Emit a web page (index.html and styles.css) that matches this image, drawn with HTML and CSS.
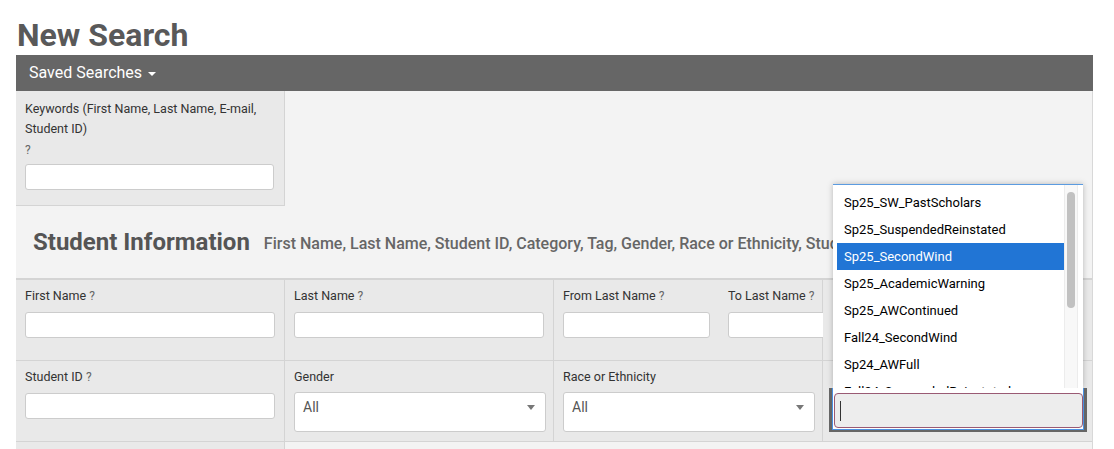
FILE: index.html
```html
<!DOCTYPE html>
<html>
<head>
    <title>New Search</title>
    <link rel="stylesheet" href="styles.css">
</head>
<body>
    <div class="page">
        <h1 class="page-title">New Search</h1>

        <div class="toolbar">
            <span class="saved-searches">Saved Searches <span class="caret"></span></span>
        </div>

        <div class="panel">
            <div class="keyword-cell">
                <label class="field-label">Keywords (First Name, Last Name, E-mail, Student ID)</label>
                <div class="help">?</div>
                <input type="text" class="text-input">
            </div>

            <div class="section-head">
                <h2>Student Information</h2>
                <span class="section-sub">First Name, Last Name, Student ID, Category, Tag, Gender, Race or Ethnicity, Student Type, Class Level</span>
            </div>

            <div class="field-grid">
                <div class="cell">
                    <label class="field-label">First Name <span class="help">?</span></label>
                    <input type="text" class="text-input">
                </div>
                <div class="cell">
                    <label class="field-label">Last Name <span class="help">?</span></label>
                    <input type="text" class="text-input">
                </div>
                <div class="cell cell-split">
                    <div class="sub-field">
                        <label class="field-label">From Last Name <span class="help">?</span></label>
                        <input type="text" class="text-input">
                    </div>
                    <div class="sub-field">
                        <label class="field-label">To Last Name <span class="help">?</span></label>
                        <input type="text" class="text-input">
                    </div>
                </div>
                <div class="cell"></div>

                <div class="cell">
                    <label class="field-label">Student ID <span class="help">?</span></label>
                    <input type="text" class="text-input">
                </div>
                <div class="cell">
                    <label class="field-label">Gender</label>
                    <div class="select-box">All<span class="select-caret"></span></div>
                </div>
                <div class="cell">
                    <label class="field-label">Race or Ethnicity</label>
                    <div class="select-box">All<span class="select-caret"></span></div>
                </div>
                <div class="cell"></div>

                <div class="cell"></div>
            </div>
        </div>

        <!-- open tag picker -->
        <div class="picker">
            <div class="picker-list">
                <ul class="picker-items">
                    <li>Sp25_SW_PastScholars</li>
                    <li>Sp25_SuspendedReinstated</li>
                    <li class="active">Sp25_SecondWind</li>
                    <li>Sp25_AcademicWarning</li>
                    <li>Sp25_AWContinued</li>
                    <li>Fall24_SecondWind</li>
                    <li>Sp24_AWFull</li>
                    <li>Fall24_SuspendedReinstated</li>
                </ul>
                <div class="picker-scroll"><div class="picker-thumb"></div></div>
            </div>
            <div class="picker-search">
                <div class="search-frame">
                    <div class="search-box"><span class="search-caret"></span></div>
                </div>
            </div>
        </div>
    </div>
</body>
</html>
```

FILE: styles.css
```css
body {
    margin: 0;
    padding: 0;
    font-family: Roboto, 'Liberation Sans', sans-serif;
    background: #fff;
    color: #333;
}

.page {
    position: relative;
    width: 1077px;
    margin-left: 16px;
    height: 449px;
    overflow: hidden;
}

.page-title {
    margin: 17px 0 2px 1px;
    font-size: 32px;
    line-height: 36px;
    font-weight: 700;
    color: #595959;
}

.toolbar {
    height: 36px;
    background: #666;
    padding-left: 13px;
    color: #fff;
    line-height: 36px;
    font-size: 16px;
}

.caret {
    display: inline-block;
    width: 0;
    height: 0;
    margin-left: 2px;
    vertical-align: middle;
    border-top: 4px solid #fff;
    border-left: 4px solid transparent;
    border-right: 4px solid transparent;
}

.panel {
    background: #f3f3f3;
    border-right: 1px solid #d8d8d8;
    box-sizing: border-box;
}

.field-label {
    display: block;
    font-size: 12.5px;
    line-height: 16px;
    color: #333;
    margin-bottom: 8px;
}

.help {
    font-size: 12px;
    color: #666;
}

.text-input {
    display: block;
    width: 100%;
    height: 26px;
    box-sizing: border-box;
    border: 1px solid #ccc;
    border-radius: 3px;
    background: #fff;
    padding: 0 8px;
}

.keyword-cell {
    width: 269px;
    height: 115px;
    box-sizing: border-box;
    padding: 8px 10px 0 9px;
    background: #e9e9e9;
    border-right: 1px solid #d4d4d4;
    border-bottom: 1px solid #d4d4d4;
}

.keyword-cell .field-label {
    line-height: 20px;
    margin-bottom: 0;
}

.keyword-cell .help {
    line-height: 22px;
    margin-bottom: 3px;
}

.section-head {
    height: 72px;
    display: flex;
    align-items: center;
    padding-left: 17px;
    white-space: nowrap;
    overflow: hidden;
    border-bottom: 2px solid #d4d4d4;
}

.section-head h2 {
    margin: 0 14px 0 0;
    font-size: 24px;
    font-weight: 700;
    color: #555;
}

.section-sub {
    font-size: 16px;
    font-weight: 500;
    color: #666;
    padding-top: 3px;
}

.field-grid {
    display: grid;
    grid-template-columns: 269px 269px 269px 1fr;
    grid-auto-rows: 81px;
}

.cell {
    box-sizing: border-box;
    padding: 8px 9px 0 9px;
    background: #e9e9e9;
    border-right: 1px solid #d4d4d4;
    border-bottom: 1px solid #d4d4d4;
}

.cell:nth-child(4n) {
    border-right: none;
}

.cell-split {
    display: flex;
    gap: 18px;
    overflow: visible;
}

.sub-field {
    flex: 0 0 147px;
}

.select-box {
    position: relative;
    height: 40px;
    margin-top: -1px;
    box-sizing: border-box;
    border: 1px solid #ccc;
    border-radius: 3px;
    background: #fff;
    padding: 6px 8px;
    font-size: 14px;
    color: #555;
    width: 252px;
}

.select-caret {
    position: absolute;
    right: 10px;
    top: 12px;
    width: 0;
    height: 0;
    border-top: 5px solid #777;
    border-left: 4px solid transparent;
    border-right: 4px solid transparent;
}

/* dropdown */
.picker {
    position: absolute;
    left: 813px;
    top: 184px;
    width: 258px;
}

.picker-list {
    margin: 0 4px;
    height: 204px;
    box-sizing: border-box;
    background: #fff;
    border-top: 1px solid #5b9be0;
    box-shadow: 0 0 6px rgba(0, 0, 0, 0.25);
    display: flex;
    overflow: hidden;
    padding-right: 5px;
}

.picker-items {
    list-style: none;
    margin: 0;
    padding: 4px 0 0 4px;
    width: 227px;
    flex: 0 0 227px;
}

.picker-items li {
    height: 27px;
    line-height: 27px;
    padding-left: 7px;
    font-size: 13px;
    color: #000;
    white-space: nowrap;
}

.picker-items li.active {
    background: #2175d5;
    color: #fff;
}

.picker-scroll {
    width: 14px;
    background: #f8f8f8;
    border-left: 1px solid #ececec;
    border-right: 1px solid #ececec;
    box-sizing: border-box;
    padding: 7px 2px 0 2px;
}

.picker-thumb {
    height: 116px;
    background: #c1c1c1;
    border-radius: 5px;
}

.picker-search {
    background: #666;
    padding: 0 3px 2px;
}

.search-frame {
    background: #fff;
    border: 1px solid #4a90e2;
    border-top: none;
    padding: 5px 0 1px 1px;
}

.search-box {
    height: 35px;
    box-sizing: border-box;
    width: 249px;
    background: #ededed;
    border: 1px solid #9a5a74;
    border-radius: 4px;
    display: flex;
    align-items: center;
    padding-left: 5px;
}

.search-caret {
    display: block;
    width: 1px;
    height: 20px;
    background: #333;
}
```
